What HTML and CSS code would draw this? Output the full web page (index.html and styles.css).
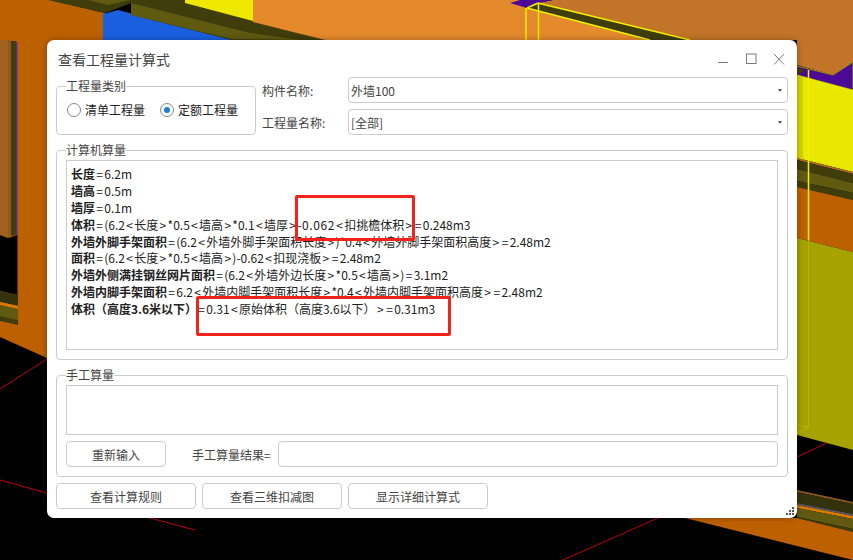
FILE: index.html
```html
<!DOCTYPE html>
<html lang="zh-CN">
<head>
<meta charset="utf-8">
<title>查看工程量计算式</title>
<link rel="stylesheet" href="styles.css">
</head>
<body>
<svg class="scene" width="853" height="560" viewBox="0 0 853 560">
  <rect width="853" height="560" fill="#000"/>
  <polygon points="0,0 50,0 105,13 105,60 47,60 47,358 0,337" fill="#bd6000"/>
  <polygon points="0,40 8,40 8,237 0,235" fill="#a0611f"/>
  <polygon points="8,40 11,40 11,236 8,237" fill="#94581a"/>
  <polygon points="11,41 16,41 16,235 11,236" fill="#3f3d0c"/>
  <rect x="16" y="42" width="1.5" height="193" fill="#5a2aa0"/>
  <polygon points="0,235 8,238 17.500,235 17.500,295 0,291" fill="#000"/>
  <polygon points="0,291 18,295 18,306 0,302" fill="#34320d"/>
  <polygon points="0,302 18,306 18,309 0,305" fill="#d97a00"/>
  <polygon points="0,305 18,309 18,320 0,316" fill="#5f5a10"/>
  <polygon points="0,316 18,320 18,325 0,321" fill="#3f3d0c"/>

  <polygon points="48,0 105,13 131,3 131,0" fill="#3f3d0c"/>
  <polygon points="88,0 130,0 108,5" fill="#5f5a10"/>
  <polygon points="103,14 118,10 232,40 103,40" fill="#1a5fe0"/>
  <polygon points="131,0 187,0 325,40 232,40 131,15" fill="#3f3d0c"/>
  <polygon points="131,3 250,33 300,40 232,39 131,15" fill="#5f5a10"/>
  <polygon points="185,0 253,0 253,21 185,3" fill="#eee800"/>
  <polygon points="253,0 520,0 535,3 690,40 325,40 253,22" fill="#e58a2c"/>
  <polygon points="553,0 853,0 853,62 833,75 797,65 797,40 690,40 538,3" fill="#c27428"/>
  <polygon points="510,3 520,0 553,0 538,3 527,8" fill="#4b0a96"/>
  <polygon points="538,4 690,40 650,40 527,8" fill="#3f3d0c"/>
  <g stroke="#f0f000" stroke-width="1.500" fill="none">
    <path d="M527,8 L650,40 M538,3 L690,40 M527,8 L538,3"/>
    <path d="M526,8 V40 M538.500,3 V40"/>
  </g>

  <polygon points="797,66 833,75 853,62 853,90 797,75" fill="#4b0a96" stroke="#9a9a00" stroke-width="1"/>
  <polygon points="797,68 806,70 797,75" fill="#3f3d0c"/>
  <polygon points="797,75 853,90 853,172 797,158" fill="#e8e800"/>
  <polygon points="797,75 803,76.500 803,160 797,158" fill="#d4d400"/>
  <polygon points="797,158 853,172 853,174 797,160" fill="#b06c28"/>
  <polygon points="797,160 853,174 853,183 797,169" fill="#3f3d0c"/>
  <polygon points="797,169 853,183 853,193 797,181" fill="#5f5a10"/>
  <polygon points="797,181 853,193 853,200 797,187" fill="#3f3d0c"/>
  <polygon points="797,187 853,200 853,252 797,238" fill="#bd6000"/>
  <polygon points="797,238 853,252 853,450 797,435" fill="#a6a200"/>
  <path d="M808.500,70 V240" stroke="#f0f000" stroke-width="1.500"/>
  <path d="M808.500,240 V427 L797,433 M797,425 L808,427" stroke="#b6b600" stroke-width="1" fill="none"/>
  <path d="M797,457 L827,443" stroke="#c00010" stroke-width="1"/>

  <polygon points="797,490 853,502 853,504 797,492" fill="#8a5a20"/>
  <polygon points="797,492 853,504 853,514 797,503" fill="#34320d"/>
  <polygon points="797,503 853,514 853,516 797,505" fill="#555566"/>
  <polygon points="797,505 853,516 853,519 797,508" fill="#d97a00"/>
  <polygon points="797,508 853,519 853,529 797,517" fill="#5f5a10"/>
  <polygon points="797,517 853,529 853,532 797,518" fill="#3f3d0c"/>
  <polygon points="685,518 797,518 853,532 853,560" fill="#bd6000"/>

  <path d="M0,389 L47,359 M0,480 L47,493 M150,518 L195,530 M658,518 L563,560" stroke="#c00010" stroke-width="1" fill="none"/>
</svg>

<main class="dialog">
  <header class="titlebar">
    <h1 class="title">查看工程量计算式</h1>
    <div class="winctrls">
      <svg class="winicon" viewBox="0 0 12 12"><path d="M1,9.500 H11"/></svg>
      <svg class="winicon" viewBox="0 0 12 12"><rect x="1.500" y="1" width="9.500" height="9.500"/></svg>
      <svg class="winicon" viewBox="0 0 12 12"><path d="M1,1 L11,11.500 M11,1 L1,11.500"/></svg>
    </div>
  </header>

  <section class="toprow">
    <div class="group group-type">
      <span class="legend">工程量类别</span>
      <label class="radio"><span class="radio-mark"></span>清单工程量</label>
      <label class="radio"><span class="radio-mark radio-on"></span>定额工程量</label>
    </div>
    <div class="fields">
      <div class="field">
        <span class="field-label">构件名称:</span>
        <div class="combo"><span>外墙100</span><i class="caret"></i></div>
      </div>
      <div class="field">
        <span class="field-label">工程量名称:</span>
        <div class="combo"><span>[全部]</span><i class="caret"></i></div>
      </div>
    </div>
  </section>

  <section class="group group-calc">
    <span class="legend">计算机算量</span>
    <div class="calcbox">
      <p class="row"><b>长度</b><i>=</i>6.2m</p>
      <p class="row"><b>墙高</b><i>=</i>0.5m</p>
      <p class="row"><b>墙厚</b><i>=</i>0.1m</p>
      <p class="row"><b>体积</b><i>=</i>(6.2<i>&lt;</i>长度<i>&gt;</i>*0.5<i>&lt;</i>墙高<i>&gt;</i>*0.1<i>&lt;</i>墙厚<i>&gt;</i><span class="num">-0.062</span><i>&lt;</i>扣挑檐体积<i>&gt;</i><i>=</i>0.248m3</p>
      <p class="row"><b>外墙外脚手架面积</b><i>=</i>(6.2<i>&lt;</i>外墙外脚手架面积长度<i>&gt;</i>)*0.4<i>&lt;</i>外墙外脚手架面积高度<i>&gt;</i><i>=</i>2.48m2</p>
      <p class="row"><b>面积</b><i>=</i>(6.2<i>&lt;</i>长度<i>&gt;</i>*0.5<i>&lt;</i>墙高<i>&gt;</i>)-0.62<i>&lt;</i>扣现浇板<i>&gt;</i><i>=</i>2.48m2</p>
      <p class="row"><b>外墙外侧满挂钢丝网片面积</b><i>=</i>(6.2<i>&lt;</i>外墙外边长度<i>&gt;</i>*0.5<i>&lt;</i>墙高<i>&gt;</i>)<i>=</i>3.1m2</p>
      <p class="row"><b>外墙内脚手架面积</b><i>=</i>6.2<i>&lt;</i>外墙内脚手架面积长度<i>&gt;</i>*0.4<i>&lt;</i>外墙内脚手架面积高度<i>&gt;</i><i>=</i>2.48m2</p>
      <p class="row"><b>体积（高度3.6米以下）</b><i>=</i>0.31<i>&lt;</i>原始体积（高度3.6以下）<i>&gt;</i><i>=</i>0.31m3</p>
    </div>
  </section>

  <section class="group group-manual">
    <span class="legend">手工算量</span>
    <div class="manualbox"></div>
    <div class="manualrow">
      <button class="btn btn-reset" type="button">重新输入</button>
      <span class="result-label">手工算量结果=</span>
      <div class="result-input"></div>
    </div>
  </section>

  <footer class="actions">
    <button class="btn btn-action" type="button">查看计算规则</button>
    <button class="btn btn-action" type="button">查看三维扣减图</button>
    <button class="btn btn-action" type="button">显示详细计算式</button>
  </footer>

  <svg class="grip" width="8" height="8" viewBox="0 0 8 8">
    <rect x="6" y="0" width="2" height="2"/>
    <rect x="3" y="3" width="2" height="2"/>
    <rect x="6" y="3" width="2" height="2"/>
    <rect x="0" y="6" width="2" height="2"/>
    <rect x="3" y="6" width="2" height="2"/>
    <rect x="6" y="6" width="2" height="2"/>
  </svg>
</main>

<div class="mark mark-a"></div>
<div class="mark mark-b"></div>
</body>
</html>
```
FILE: styles.css
```css
* { box-sizing: border-box; }

html, body {
  margin: 0;
  padding: 0;
  width: 853px;
  height: 560px;
  overflow: hidden;
  background: #000;
  font-family: "Noto Sans CJK SC", "Noto Sans", sans-serif;
  font-size: 12px;
  color: #333;
}

.scene {
  position: absolute;
  left: 0;
  top: 0;
  display: block;
}

.dialog {
  position: absolute;
  left: 47px;
  top: 40px;
  width: 750px;
  height: 478px;
  padding: 0 9px 9px;
  background: #fff;
  border-radius: 7px;
  box-shadow: 0 0 6px rgba(0, 0, 0, 0.3);
  display: flex;
  flex-direction: column;
}

.titlebar {
  height: 37px;
  flex: none;
  display: flex;
  align-items: center;
  padding: 0 3px 0 2px;
}

.title {
  margin: 0;
  font-size: 14px;
  font-weight: 400;
  color: #444;
}

.winctrls {
  margin-left: auto;
  display: flex;
  gap: 16px;
}

.winicon {
  width: 12px;
  height: 12px;
  display: block;
  fill: none;
  stroke: #7a7a7a;
  stroke-width: 1;
}

.toprow {
  display: flex;
  gap: 6px;
  flex: none;
}

.group {
  position: relative;
  border: 1px solid #ccc;
  border-radius: 4px;
}

.legend {
  position: absolute;
  left: 9px;
  top: -9px;
  line-height: 16px;
  background: #fff;
  color: #444;
}

.group-type {
  width: 200px;
  height: 49px;
  margin-top: 9px;
  display: flex;
  align-items: flex-start;
  gap: 15px;
  padding: 14px 0 0 10px;
}

.radio {
  display: flex;
  align-items: center;
  gap: 4px;
  line-height: 18px;
  color: #222;
}

.radio-mark {
  width: 14px;
  height: 14px;
  border: 1px solid #888;
  border-radius: 50%;
  background: #fff;
  display: flex;
  align-items: center;
  justify-content: center;
}

.radio-on::after {
  content: "";
  width: 6px;
  height: 6px;
  border-radius: 50%;
  background: #1e7be0;
}

.fields {
  flex: 1;
  display: flex;
  flex-direction: column;
  gap: 6px;
}

.field {
  display: flex;
  align-items: center;
  height: 26px;
}

.field-label {
  width: 86px;
  flex: none;
  color: #444;
}

.combo {
  flex: 1;
  height: 26px;
  border: 1px solid #ccc;
  border-radius: 4px;
  display: flex;
  align-items: center;
  padding: 0 5px 0 2px;
  color: #444;
}

.caret {
  margin-left: auto;
  width: 0;
  height: 0;
  border-left: 2.500px solid transparent;
  border-right: 2.500px solid transparent;
  border-top: 3px solid #555;
}

.group-calc {
  height: 210px;
  margin-top: 15px;
  padding: 9px;
  flex: none;
}

.calcbox {
  height: 190px;
  border: 1px solid #ccc;
  padding: 5px 4px 4px;
}

.row {
  margin: 0;
  line-height: 16.875px;
  height: 16.875px;
  white-space: nowrap;
  color: #222;
}

.row b {
  font-weight: 700;
}

.row i {
  font-style: normal;
  margin: 0 1.300px;
}

.row .num {
  letter-spacing: 0.6px;
}

.group-manual {
  height: 102px;
  margin-top: 15px;
  padding: 9px;
  flex: none;
}

.manualbox {
  height: 50px;
  border: 1px solid #ccc;
}

.manualrow {
  margin-top: 6px;
  height: 26px;
  display: flex;
  align-items: center;
}

.btn {
  height: 26px;
  padding: 0;
  background: #fff;
  border: 1px solid #ccc;
  border-radius: 4px;
  font: inherit;
  color: #444;
}

.btn-reset {
  width: 100px;
  flex: none;
}

.result-label {
  margin-left: 26px;
  width: 86px;
  flex: none;
  color: #444;
}

.result-input {
  flex: 1;
  height: 26px;
  border: 1px solid #ccc;
  border-radius: 4px;
}

.actions {
  margin-top: 6px;
  display: flex;
  gap: 6px;
  flex: none;
}

.btn-action {
  width: 140px;
}

.grip {
  position: absolute;
  right: 3px;
  bottom: 3px;
  fill: #555;
}

.mark {
  position: absolute;
  border: 3px solid #f5221b;
  border-radius: 2px;
}

.mark-a {
  left: 295px;
  top: 195px;
  width: 120px;
  height: 46px;
}

.mark-b {
  left: 196px;
  top: 296px;
  width: 255px;
  height: 40px;
}
```
